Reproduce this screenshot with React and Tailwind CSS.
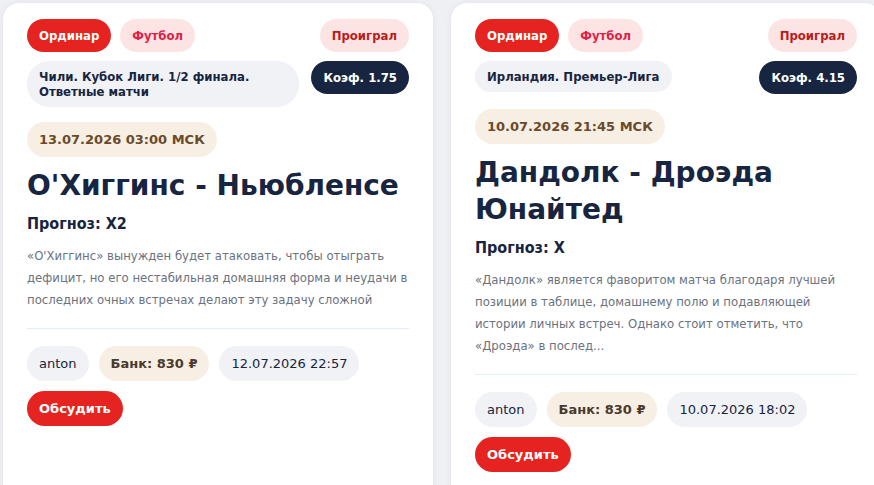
const bets = [
  {
    league: "Чили. Кубок Лиги. 1/2 финала. Ответные матчи",
    coef: "1.75",
    start: "13.07.2026 03:00 МСК",
    title: "О'Хиггинс - Ньюбленсе",
    pick: "X2",
    text: "«О'Хиггинс» вынужден будет атаковать, чтобы отыграть дефицит, но его нестабильная домашняя форма и неудачи в последних очных встречах делают эту задачу сложной",
    user: "anton",
    bank: "830 ₽",
    created: "12.07.2026 22:57",
  },
  {
    league: "Ирландия. Премьер-Лига",
    coef: "4.15",
    start: "10.07.2026 21:45 МСК",
    title: "Дандолк - Дроэда Юнайтед",
    pick: "X",
    text: "«Дандолк» является фаворитом матча благодаря лучшей позиции в таблице, домашнему полю и подавляющей истории личных встреч. Однако стоит отметить, что «Дроэда» в послед...",
    user: "anton",
    bank: "830 ₽",
    created: "10.07.2026 18:02",
  },
];

// wide face for dates, title and footer chips; condensed for tags and body
const wide = "font-['DejaVu_Sans',sans-serif]";

function BetCard({ bet }) {
  return (
    <div className="w-[430px] shrink-0 bg-white rounded-[16px] shadow-[0_0_6px_rgba(15,23,42,0.06)] px-6 pt-4 pb-10">
      <div className="flex items-center justify-between">
        <div className="flex gap-[9px]">
          <span className="h-[33px] px-3 flex items-center rounded-full bg-[#e52421] text-white text-[13px] font-bold">Ординар</span>
          <span className="h-[33px] px-3 flex items-center rounded-full bg-[#fde4e4] text-[#e11d48] text-[13px] font-bold">Футбол</span>
        </div>
        <span className="h-[33px] px-3 flex items-center rounded-full bg-[#fde4e4] text-[#b91c1c] text-[13px] font-bold">Проиграл</span>
      </div>

      <div className="flex items-start justify-between gap-3 mt-[9px]">
        <span className="px-3 py-2 rounded-[22px] bg-[#f1f2f6] text-[#172540] text-[13px] leading-[15px] font-bold max-w-[272px]">{bet.league}</span>
        <span className="h-[33px] px-3 flex items-center rounded-full bg-[#172540] text-white text-[13px] font-bold whitespace-nowrap">Коэф. {bet.coef}</span>
      </div>

      <div className="mt-[15px] flex">
        <span className={`h-[35px] px-3 flex items-center rounded-full bg-[#f7efe4] text-[#6b4a2b] text-[13px] font-bold ${wide}`}>{bet.start}</span>
      </div>

      <h2 className={`mt-[10px] text-[28px] leading-[37px] font-bold text-[#172540] ${wide}`}>{bet.title}</h2>
      <p className="mt-[9px] text-[16px] leading-[22px] font-bold text-[#172540]">Прогноз: {bet.pick}</p>
      <p className="mt-[10px] text-[13px] leading-[22px] text-[#6b7280]">{bet.text}</p>

      <div className="mt-[17px] border-t border-[#e3edf5]"></div>

      <div className={`mt-[17px] flex gap-[10px] ${wide}`}>
        <span className="h-[35px] px-3 flex items-center rounded-full bg-[#f1f2f6] text-[#172540] text-[13px]">{bet.user}</span>
        <span className="h-[35px] px-3 flex items-center rounded-full bg-[#f7efe4] text-[#4a3a2c] text-[13px] font-bold">Банк: {bet.bank}</span>
        <span className="h-[35px] px-3 flex items-center rounded-full bg-[#f1f2f6] text-[#172540] text-[13px]">{bet.created}</span>
      </div>

      <button className={`block mt-[10px] h-[35px] px-3 rounded-full bg-[#e52421] text-white text-[13px] font-bold ${wide}`}>Обсудить</button>
    </div>
  );
}

export default function App() {
  return (
    <div className="w-[874px] h-[485px] overflow-hidden bg-[#eff0f3] font-['DejaVu_Sans_Condensed','DejaVu_Sans',sans-serif]">
      <div className="flex items-stretch gap-[18px] pl-[3px] pt-[3px]">
        {bets.map((bet, i) => (
          <BetCard key={i} bet={bet} />
        ))}
      </div>
    </div>
  );
}
